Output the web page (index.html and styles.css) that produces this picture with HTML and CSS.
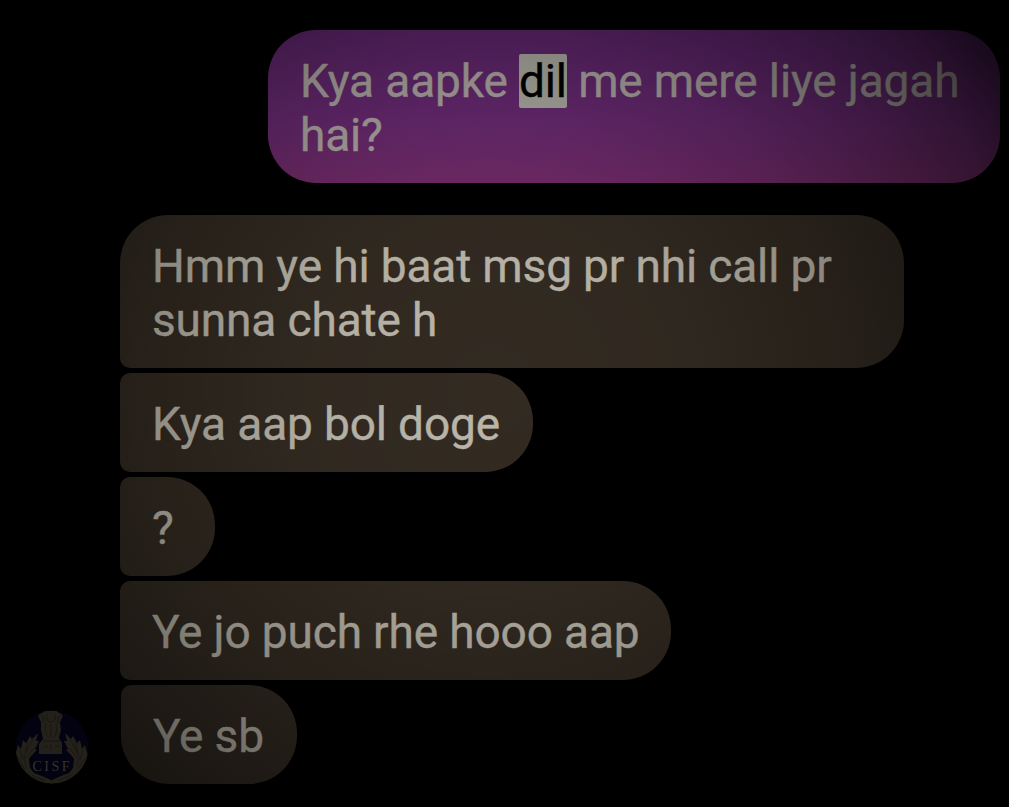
FILE: index.html
```html
<!DOCTYPE html>
<html lang="hi-Latn">
<head>
<meta charset="utf-8">
<title>Chat</title>
<link rel="stylesheet" href="styles.css">
</head>
<body>
<main class="chat">
  <div class="bubble sent">Kya aapke <mark class="hit">dil</mark> me mere liye jagah<br>hai?</div>
  <section class="received">
    <svg class="avatar" viewBox="0 0 74 74" role="img" aria-label="CISF">
      <defs>
        <clipPath id="disc"><circle cx="37" cy="37" r="36.5"/></clipPath>
        <g id="wreath">
          <path d="M0 46 L3 35 L6 39 L8 30 L11 33 L15 26 L17 29 L23 23 L21 31 L24 31 L20 39 L22 40 L17 45 L14 49 L15 58 L19 63 L27 66 L36 70 L38 74 L25 74 L12 68 L3 58Z"/>
          <path class="vein" d="M18 29 L9 46 L11 57 M5 40 L8 50 M13 32 L10 43 M3 48 L10 59 M19 38 L11 48 M17 65 L30 71"/>
        </g>
      </defs>
      <g clip-path="url(#disc)">
        <circle class="disc" cx="37" cy="37" r="36.5"/>
        <g class="emblem">
          <use href="#wreath"/>
          <use href="#wreath" transform="translate(73 0) scale(-1 1)"/>
          <path d="M24 8 Q22 4 27 3 Q30 -1 35 1 Q41 -1 44 3 Q49 4 47 8 L45 12 L46 20 L44 28 L47 33 L47 44 L24 44 L24 34 L28 29 L26 20 L26 12Z"/>
          <path class="vein" d="M27 5 Q30 10 28 13 M45 5 Q41 10 44 13 M32 4 Q30 8 33 11 Q36 13 39 11 Q42 8 40 4 M31 13 Q29 19 32 27 M41 13 Q43 19 40 27 M36 14 V27 M28 31 H45 M28 38 Q31 33 33 38 M36 34 V40 M40 38 Q43 33 45 38"/>
        </g>
        <text class="crest" x="36" y="60.5" textLength="37" text-anchor="middle">CISF</text>
      </g>
    </svg>
    <div class="thread">
      <div class="bubble wide">Hmm ye hi baat msg pr nhi call pr<br>sunna chate h</div>
      <div class="bubble doge">Kya aap bol doge</div>
      <div class="bubble query">?</div>
      <div class="bubble puch">Ye jo puch rhe hooo aap</div>
      <div class="bubble last">Ye sb</div>
    </div>
  </section>
  <div class="vignette"></div>
</main>
</body>
</html>
```
FILE: styles.css
```css
* { box-sizing: border-box; }
body { margin: 0; background: #000; }
.chat {
  position: relative;
  display: flex;
  flex-direction: column;
  gap: 32px;
  width: 1009px;
  height: 807px;
  padding: 30px 9px 0 15px;
  overflow: hidden;
  background: #000;
  font: 46px/54px Roboto, "Liberation Sans", sans-serif;
  letter-spacing: -.14px;
  -webkit-text-stroke: .4px;
  color: #bcb7ab;
}
.bubble {
  flex: none;
  width: 413px;
  height: 99px;
  padding: 24px 0 0 32px;
  border-radius: 10px 48px 48px 10px;
  background: #332b22;
  white-space: nowrap;
}
.sent {
  align-self: flex-end;
  width: 732px;
  height: 153px;
  border-radius: 48px;
  background: linear-gradient(#60266f, #6d2b76 60%, #742b6a);
  color: #b4ada8;
}
.hit {
  display: inline-block;
  height: 54px;
  border-radius: 2px;
  background: #b1b1a7;
  color: #000;
}
.received { display: flex; align-items: flex-end; gap: 31px; height: 569px; }
.avatar { position: relative; z-index: 2; width: 74px; height: 74px; }
.thread { display: flex; flex-direction: column; gap: 5px; }
.wide { width: 784px; height: 153px; border-radius: 48px 48px 48px 10px; }
.query { width: 95px; }
.puch { width: 551px; }
.last { width: 176px; margin-left: 1px; border-radius: 10px 48px 48px 48px; }
.disc { fill: #030211; }
.emblem { fill: #24211a; }
.vein { fill: none; stroke: #171511; stroke-width: 0.8; }
.crest { fill: #37332e; font: 14px "Liberation Serif", serif; letter-spacing: 0; -webkit-text-stroke: 0; }
.vignette {
  position: absolute;
  inset: 0;
  z-index: 1;
  pointer-events: none;
  background: radial-gradient(circle at 490px 390px, rgba(0,0,0,0) 0, rgba(0,0,0,.05) 180px, rgba(0,0,0,.25) 350px, rgba(0,0,0,.42) 460px, rgba(0,0,0,.56) 540px, rgba(0,0,0,.85) 640px);
}
```
